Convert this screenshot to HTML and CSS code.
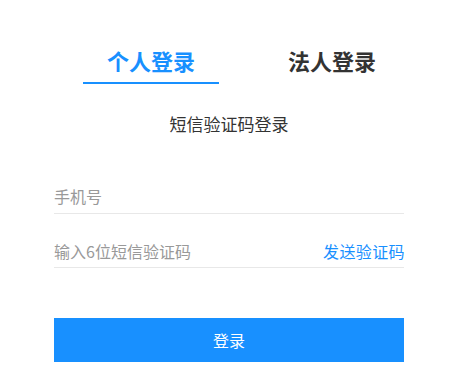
FILE: index.html
```html
<!DOCTYPE html>
<html lang="zh-CN">
<head>
<meta charset="utf-8">
<title>登录</title>
<link rel="stylesheet" href="styles.css">
</head>
<body>
<div class="login">
  <div class="tabs">
    <div class="tab active">个人登录</div>
    <div class="tab">法人登录</div>
  </div>
  <div class="subtitle">短信验证码登录</div>
  <form class="form">
    <div class="field field-phone">
      <input class="input" type="text" placeholder="手机号">
    </div>
    <div class="field field-code">
      <input class="input" type="text" placeholder="输入6位短信验证码">
      <a class="send" href="#">发送验证码</a>
    </div>
    <button class="submit" type="button">登录</button>
  </form>
</div>
</body>
</html>
```

FILE: styles.css
```css
* { box-sizing: border-box; }
html, body { margin: 0; padding: 0; background: #fff; }
body {
  font-family: "Noto Sans CJK SC", "Noto Sans", sans-serif;
  color: #333;
}
.login {
  width: 350px;
  margin-left: 54px;
  padding-top: 45px;
}
.tabs {
  display: flex;
  gap: 45px;
  padding-left: 29px;
}
.tab {
  width: 136px;
  text-align: center;
  font-size: 22px;
  font-weight: 700;
  line-height: 30px;
  padding-bottom: 7px;
  border-bottom: 2px solid transparent;
  color: #333;
}
.tab.active {
  color: #1890ff;
  border-bottom-color: #1890ff;
}
.subtitle {
  margin-top: 28px;
  text-align: center;
  font-size: 17px;
  line-height: 24px;
  color: #333;
}
.form { margin: 0; }
.field {
  display: flex;
  align-items: center;
  border-bottom: 1px solid #e8e8e8;
  padding-bottom: 5px;
}
.field-phone { margin-top: 48px; }
.field-code { margin-top: 25px; padding-bottom: 4px; }
.input {
  flex: 1;
  min-width: 0;
  border: none;
  outline: none;
  padding: 0;
  margin: 0;
  height: 24px;
  font: 16px/24px "Noto Sans CJK SC", "Noto Sans", sans-serif;
  color: #333;
  background: transparent;
}
.input::placeholder { color: #999; }
.send {
  font-size: 16px;
  line-height: 24px;
  color: #1890ff;
  text-decoration: none;
  letter-spacing: 0.4px;
  margin-right: -1px;
}
.submit {
  display: block;
  width: 350px;
  height: 44px;
  margin-top: 50px;
  border: none;
  background: #1890ff;
  color: #fff;
  font: 16px/44px "Noto Sans CJK SC", "Noto Sans", sans-serif;
  padding: 0;
  cursor: pointer;
}
```
